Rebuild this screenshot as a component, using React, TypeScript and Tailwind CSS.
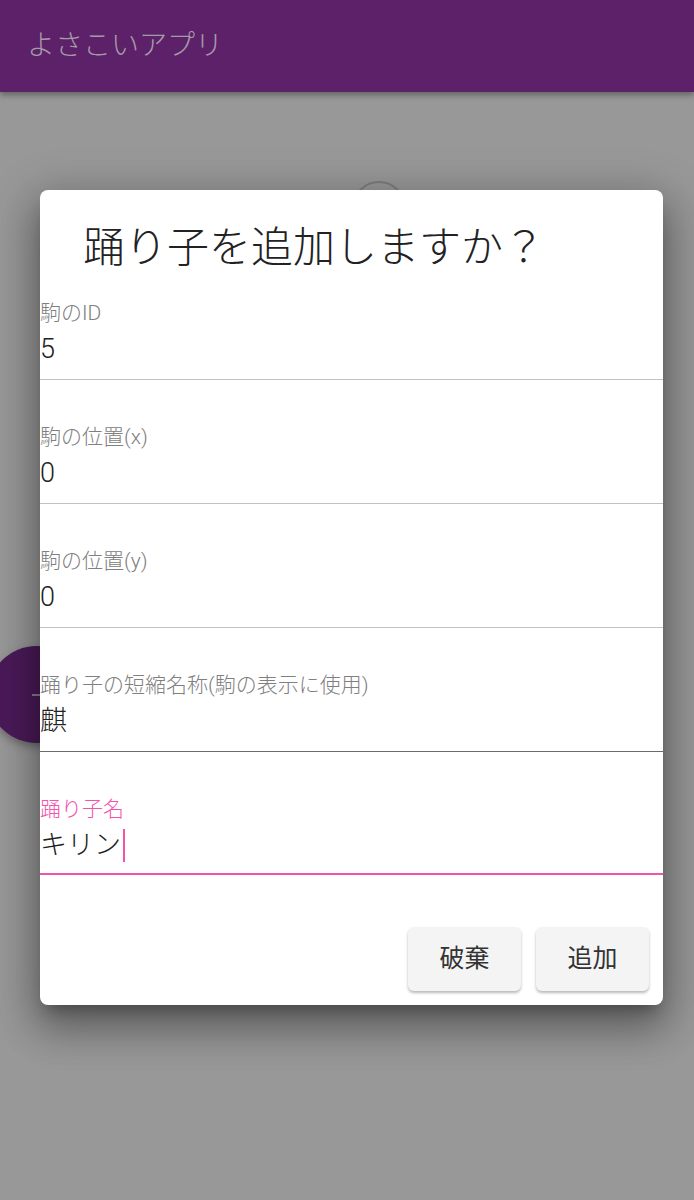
import React from 'react';

const fields = [
    { label: '駒のID', value: '5' },
    { label: '駒の位置(x)', value: '0' },
    { label: '駒の位置(y)', value: '0' },
    { label: '踊り子の短縮名称(駒の表示に使用)', value: '麒', hover: true },
];

const font = { fontFamily: 'Roboto, "Noto Sans CJK JP", sans-serif' };

export default function App() {
    return (
        <div className="relative w-[694px] h-[1200px] overflow-hidden bg-[#989898]" style={font}>
            {/* App bar */}
            <header className="relative z-10 h-[92px] flex items-center px-[27px] bg-[#5c2169] shadow-[0_3px_6px_rgba(0,0,0,0.35)]">
                <h1 className="text-[28px] leading-none text-[#a59ba8] font-light">よさこいアプリ</h1>
            </header>

            {/* Page content behind the overlay */}
            <div className="absolute left-[352px] top-[181px] w-[54px] h-[54px] rounded-full border-2 border-[#7d7d7d]" />
            <div className="absolute left-[-12px] top-[646px] w-[97px] h-[97px] rounded-full bg-[#4b1a59] shadow-[0_4px_8px_rgba(0,0,0,0.3)] flex items-center justify-center">
                <span className="block w-[22px] h-[2px] bg-[#8d7c92] ml-[12px]" />
            </div>

            {/* Dialog */}
            <div className="absolute inset-0 z-20 pt-[190px] pl-[40px]">
                <div className="w-[623px] h-[815px] bg-white rounded-[8px] shadow-[0_11px_15px_-7px_rgba(0,0,0,0.3),0_24px_38px_3px_rgba(0,0,0,0.24),0_9px_46px_8px_rgba(0,0,0,0.2)] flex flex-col">
                    <div className="h-[66px] pt-[37px] pl-[43px]">
                        <h2 className="text-[42px] leading-[42px] text-[#222] font-light whitespace-nowrap">踊り子を追加しますか？</h2>
                    </div>

                    {fields.map((f) => (
                        <div
                            key={f.label}
                            className={`pt-[45px] pb-[15px] border-b ${f.hover ? 'border-[#6b6b6b]' : 'border-[#c2c2c2]'}`}
                        >
                            <div className="h-[24px] leading-[24px] text-[21px] font-light text-[#808080] whitespace-nowrap">{f.label}</div>
                            <div className="mt-[9px] h-[30px] leading-[30px] text-[27px] font-light text-[#222]">{f.value}</div>
                        </div>
                    ))}

                    <div className="pt-[45px] pb-[13px] border-b-2 border-[#f552ac]">
                        <div className="h-[24px] leading-[24px] text-[21px] font-light text-[#f552ac]">踊り子名</div>
                        <div className="mt-[9px] h-[30px] leading-[30px] text-[27px] font-light text-[#222] flex items-center">
                            <span>キリン</span>
                            <span className="inline-block w-[2px] h-[33px] bg-[#f552ac] ml-[2px]" />
                        </div>
                    </div>

                    <div className="mt-auto flex justify-end gap-[15px] pr-[14px] pb-[14px]">
                        <button className="w-[113px] h-[64px] rounded-[6px] bg-[#f4f4f4] text-[25px] text-[#333] shadow-[0_2px_3px_rgba(0,0,0,0.28)]">破棄</button>
                        <button className="w-[113px] h-[64px] rounded-[6px] bg-[#f4f4f4] text-[25px] text-[#333] shadow-[0_2px_3px_rgba(0,0,0,0.28)]">追加</button>
                    </div>
                </div>
            </div>
        </div>
    );
}
